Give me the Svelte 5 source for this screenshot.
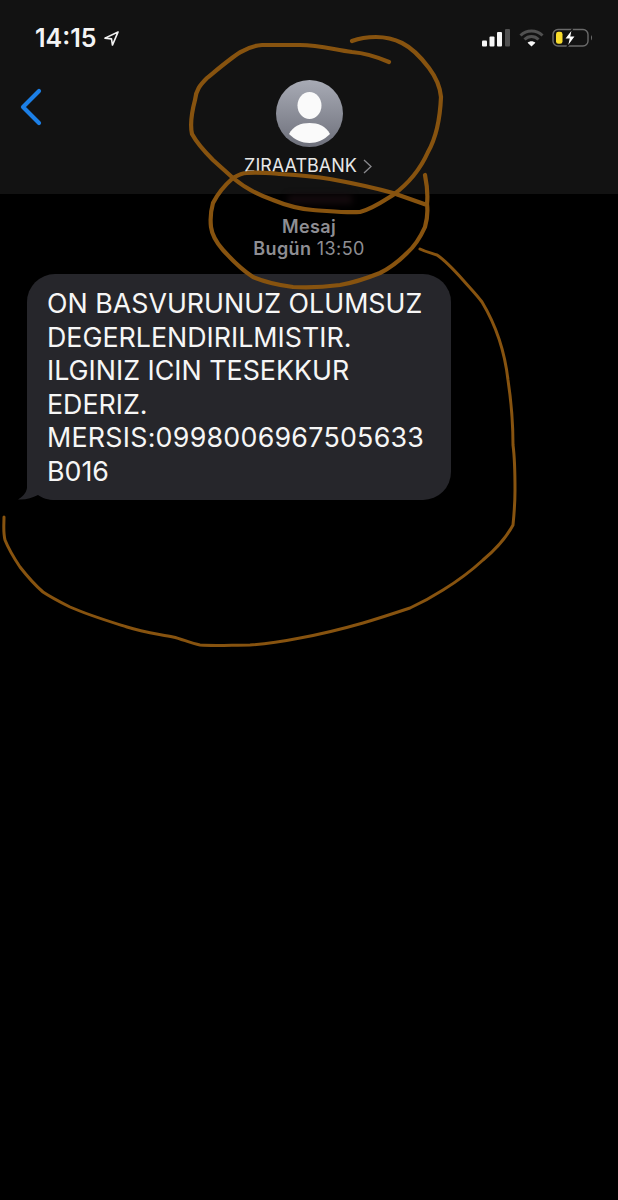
<script>
	const lines = [
		'ON BASVURUNUZ OLUMSUZ',
		'DEGERLENDIRILMISTIR.',
		'ILGINIZ ICIN TESEKKUR',
		'EDERIZ.',
		'MERSIS:0998006967505633',
		'B016'
	];
	const bars = [
		{ x: 0, y: 11.5, h: 6, on: true },
		{ x: 7.5, y: 7.5, h: 10, on: true },
		{ x: 15, y: 3, h: 14.5, on: true },
		{ x: 23, y: 0, h: 17.5, on: false }
	];
	// hand drawn marker strokes on top of the screenshot
	const marks = [
		'M389 62 C375 56 365 53 352 52 C335 50 320 45 300 45 L262 45 C245 46 235 55 207 78 C200 85 196 90 195 100 C191 115 190 125 192 134 C198 145 205 152 213 160 L233 178 C245 188 258 195 273 200 C290 207 300 209 313 210 C330 211 345 213 360 212 C372 209 382 202 393 195 C408 184 420 170 428 152 C436 138 440 120 441 97 C440 85 435 76 429 68 C420 56 412 48 402 43 C392 38 384 37 376 37 C368 37 360 38 352 41',
		'M425 175 C427 185 428 195 427 204 C428 212 427 220 425 227 C420 238 415 246 407 253 C398 262 390 268 380 273 C365 279 352 283 340 285 C325 287 308 288 293 287 C278 285 265 282 253 277 C242 270 232 260 223 250 C216 242 212 235 211 227 C210 218 211 210 213 203 C218 193 225 185 233 178 C238 175 242 173 247 173 C258 172 268 173 280 174 C296 175 312 176 330 179 C352 183 372 187 393 193 L427 205',
		'M420 249 C426 252 431 253 437 255 C446 261 455 271 463 280 C470 288 476 294 482 302 C494 322 504 345 508 380 C511 400 513 420 513 445 C515 460 515 475 515 490 C515 505 514 515 513 525 C505 540 495 550 483 560 C470 572 456 582 443 590 C432 597 421 603 410 608 C395 613 380 618 363 623 C342 629 322 634 300 638 C285 641 268 644 250 645 C232 645 215 646 200 645 C190 643 182 639 173 637 C158 634 142 632 127 627 C108 621 88 615 70 607 C60 602 52 598 43 592 C35 585 27 576 20 567 C14 558 9 550 5 540 C3 532 4 525 4 517'
	];
</script>

<div class="screen">
	<header class="top">
		<div class="status">
			<div class="clock">
				<span>14:15</span>
				<svg width="15" height="15" viewBox="0 0 16 16" fill="none">
					<path d="M15 1 L1 7.6 L8 8.4 L9 15 Z" stroke="#f2f2f2" stroke-width="1.7" stroke-linejoin="round" />
				</svg>
			</div>
			<div class="indicators">
				<svg width="29" height="18" viewBox="0 0 29 18">
					{#each bars as b}
						<rect x={b.x} y={b.y} width="5" height={b.h} rx="1" fill={b.on ? '#f7f7f7' : '#505050'} />
					{/each}
				</svg>
				<svg width="25" height="18" viewBox="0 0 25 18" fill="none">
					<path d="M1.5 6.5 C7.5 0.5 17.5 0.5 23.5 6.5" stroke="#505050" stroke-width="3" />
					<path d="M5.5 10.5 C9.5 6.5 15.5 6.5 19.5 10.5" stroke="#505050" stroke-width="3" />
					<path d="M12.5 17.5 L8.6 13.8 C10.8 11.8 14.2 11.8 16.4 13.8 Z" fill="#f7f7f7" />
				</svg>
				<svg width="41" height="20" viewBox="0 0 41 20" fill="none">
					<rect x="1" y="1.5" width="35" height="16.5" rx="5" stroke="#6a6a6a" stroke-width="1.4" />
					<rect x="4" y="3.8" width="6.5" height="12" rx="2.4" fill="#f8dc2c" />
					<path d="M39 7 C40.4 8 40.4 11.5 39 12.5 Z" fill="#6a6a6a" />
					<path d="M20.5 0.5 L12.5 11 L17 11 L15 19.5 L23.5 8 L19 8 Z" fill="#fff" stroke="#121212" stroke-width="1.2" />
				</svg>
			</div>
		</div>
		<div class="nav">
			<svg class="back" width="24" height="38" viewBox="0 0 24 38" fill="none">
				<path d="M19 3 L3 19 L19 35" stroke="#1c7fe6" stroke-width="4.2" stroke-linecap="round" stroke-linejoin="round" />
			</svg>
			<svg class="avatar" width="67" height="67" viewBox="0 0 67 67">
				<defs>
					<linearGradient id="avatarBg" x1="0" y1="0" x2="0" y2="1">
						<stop offset="0" stop-color="#a8abb5" />
						<stop offset="1" stop-color="#6e707b" />
					</linearGradient>
					<clipPath id="avatarClip"><circle cx="33.5" cy="33.5" r="33.5" /></clipPath>
				</defs>
				<circle cx="33.5" cy="33.5" r="33.5" fill="url(#avatarBg)" />
				<g clip-path="url(#avatarClip)" fill="#fafafa">
					<ellipse cx="33.5" cy="25.5" rx="12" ry="13.5" />
					<path d="M13 54 C17 46 25 43 33.5 43 C42 43 50 46 54 54 C48 60 41 63 33.5 63 C26 63 19 60 13 54 Z" />
				</g>
			</svg>
			<div class="contact">
				<span>ZIRAATBANK</span>
				<svg width="9" height="15" viewBox="0 0 9 15" fill="none">
					<path d="M1 1 L8 7.5 L1 14" stroke="#8a8a8e" stroke-width="1.3" />
				</svg>
			</div>
		</div>
	</header>

	<main class="thread">
		<div class="smudge"></div>
		<div class="stamp">
			<div class="strong">Mesaj</div>
			<div><span class="strong">Bugün</span> 13:50</div>
		</div>
		<div class="bubble">
			<svg class="tail" width="50" height="30" viewBox="0 0 50 30">
				<path d="M9 0 L9 18 C8 24 4 27 0 29.5 C8 30 14 28 20 25 C24 28 30 30 38 30 L50 30 L50 0 Z" fill="#26262b" />
			</svg>
			{#each lines as line, i}
				<div class="line" class:digits={i === 4}>{line}</div>
			{/each}
		</div>
	</main>

	<svg class="marker" width="618" height="1200" viewBox="0 0 618 1200" fill="none">
		<path d={marks[0]} stroke="#87530f" stroke-width="4.2" stroke-linecap="round" />
		<path d={marks[1]} stroke="#87530f" stroke-width="4.2" stroke-linecap="round" />
		<path d={marks[2]} stroke="#87530f" stroke-width="3" stroke-linecap="round" />
	</svg>
</div>

<style>
	:global(body) {
		background: #000;
	}
	.screen {
		position: relative;
		width: 618px;
		height: 1200px;
		overflow: hidden;
		background: #000;
		color: #fff;
		font-family: Inter, "Liberation Sans", sans-serif;
	}
	.top {
		height: 194px;
		background: #121212;
		box-sizing: border-box;
		padding-top: 24px;
	}
	.status {
		display: flex;
		justify-content: space-between;
		align-items: center;
		height: 28px;
		padding: 0 25px 0 35px;
	}
	.clock {
		display: flex;
		align-items: center;
		gap: 7px;
		font-size: 25px;
		font-weight: 600;
		color: #f4f4f4;
	}
	.indicators {
		display: flex;
		align-items: center;
		gap: 8px;
	}
	.nav {
		position: relative;
		display: flex;
		flex-direction: column;
		align-items: center;
		padding-top: 28px;
	}
	.back {
		position: absolute;
		left: 20px;
		top: 36px;
	}
	.contact {
		display: flex;
		align-items: center;
		gap: 6px;
		margin-top: 9px;
		margin-left: -2px;
		font-size: 18px;
		line-height: 20px;
		color: #e8e8e8;
	}
	.thread {
		position: relative;
		display: flex;
		flex-direction: column;
	}
	.smudge {
		position: absolute;
		left: 288px;
		top: 1px;
		width: 64px;
		height: 9px;
		background: #140a0d;
		filter: blur(3px);
	}
	.stamp {
		margin-top: 22px;
		text-align: center;
		font-size: 18px;
		line-height: 22px;
		letter-spacing: 0.4px;
		color: #8e8e93;
	}
	.strong {
		font-weight: 600;
	}
	.bubble {
		position: relative;
		box-sizing: border-box;
		width: 424px;
		height: 226px;
		margin: 14px 0 0 27px;
		padding: 13px 0 0 20px;
		border-radius: 28px;
		background: #26262b;
		font-size: 26.8px;
		line-height: 33.6px;
		color: #f6f6f6;
	}
	.line {
		position: relative;
	}
	.digits {
		letter-spacing: 0.25px;
	}
	.tail {
		position: absolute;
		left: -9px;
		bottom: 0;
	}
	.marker {
		position: absolute;
		left: 0;
		top: 0;
		pointer-events: none;
	}
</style>
